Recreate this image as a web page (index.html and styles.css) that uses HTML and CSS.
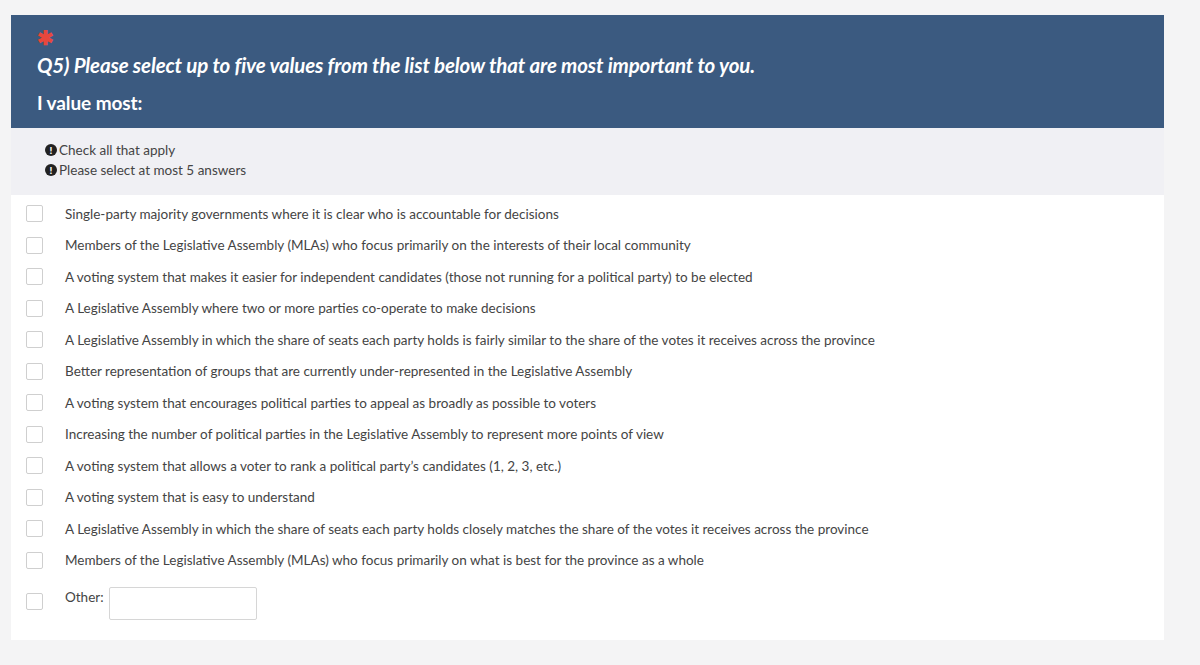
FILE: index.html
```html
<!DOCTYPE html>
<html lang="en">
<head>
<meta charset="utf-8">
<title>Q5</title>
<link rel="stylesheet" href="styles.css">
</head>
<body>
<div class="card">
  <div class="qhead">
    <div class="req">&#10033;</div>
    <div class="qtitle">Q5) Please select up to five values from the list below that are most important to you.</div>
    <div class="qsub">I value most:</div>
  </div>
  <div class="help">
    <div class="tip"><span class="ico">!</span>Check all that apply</div>
    <div class="tip"><span class="ico">!</span>Please select at most 5 answers</div>
  </div>
  <ul class="answers">
    <li class="ans"><span class="cb"></span><span class="lbl">Single-party majority governments where it is clear who is accountable for decisions</span></li>
    <li class="ans"><span class="cb"></span><span class="lbl">Members of the Legislative Assembly (MLAs) who focus primarily on the interests of their local community</span></li>
    <li class="ans"><span class="cb"></span><span class="lbl">A voting system that makes it easier for independent candidates (those not running for a political party) to be elected</span></li>
    <li class="ans"><span class="cb"></span><span class="lbl">A Legislative Assembly where two or more parties co-operate to make decisions</span></li>
    <li class="ans"><span class="cb"></span><span class="lbl">A Legislative Assembly in which the share of seats each party holds is fairly similar to the share of the votes it receives across the province</span></li>
    <li class="ans"><span class="cb"></span><span class="lbl">Better representation of groups that are currently under-represented in the Legislative Assembly</span></li>
    <li class="ans"><span class="cb"></span><span class="lbl">A voting system that encourages political parties to appeal as broadly as possible to voters</span></li>
    <li class="ans"><span class="cb"></span><span class="lbl">Increasing the number of political parties in the Legislative Assembly to represent more points of view</span></li>
    <li class="ans"><span class="cb"></span><span class="lbl">A voting system that allows a voter to rank a political party’s candidates (1, 2, 3, etc.)</span></li>
    <li class="ans"><span class="cb"></span><span class="lbl">A voting system that is easy to understand</span></li>
    <li class="ans"><span class="cb"></span><span class="lbl">A Legislative Assembly in which the share of seats each party holds closely matches the share of the votes it receives across the province</span></li>
    <li class="ans"><span class="cb"></span><span class="lbl">Members of the Legislative Assembly (MLAs) who focus primarily on what is best for the province as a whole</span></li>
    <li class="ans other"><span class="cb"></span><span class="lbl">Other:</span><span class="otherbox"></span></li>
  </ul>
</div>
</body>
</html>
```
FILE: styles.css
```css
html, body {
  margin: 0;
  padding: 0;
  background: #f4f4f5;
}
body {
  font-family: Lato, "Open Sans", sans-serif;
  color: #333;
  padding: 15px 36px 0 11px;
}
.card {
  background: #fff;
  height: 625px;
  box-sizing: border-box;
}
.qhead {
  background: #3b5a80;
  color: #fff;
  padding: 12px 26px 13px;
  height: 113px;
  box-sizing: border-box;
}
.req {
  color: #e8473d;
  font-size: 20px;
  line-height: 20px;
  height: 20px;
  font-weight: bold;
}
.qtitle {
  font-weight: bold;
  font-style: italic;
  font-size: 20.5px;
  letter-spacing: -0.14px;
  line-height: 24px;
  margin-top: 6px;
}
.qsub {
  font-weight: bold;
  font-size: 19px;
  letter-spacing: -0.1px;
  line-height: 24px;
  margin-top: 14px;
}
.help {
  background: #f0f0f4;
  height: 67px;
  box-sizing: border-box;
  padding: 12px 34px 0;
  font-size: 13.5px;
  color: #444;
}
.tip {
  display: flex;
  align-items: center;
  line-height: 20px;
}
.ico {
  width: 12px;
  height: 12px;
  border-radius: 50%;
  background: #222;
  color: #fff;
  font-size: 10px;
  font-weight: 900;
  line-height: 12px;
  text-align: center;
  margin-right: 2px;
}
.answers {
  list-style: none;
  margin: 0;
  padding: 3px 0 0 15px;
}
.ans {
  display: flex;
  align-items: center;
  height: 31.5px;
  font-size: 13.5px;
  color: #444;
}
.cb {
  width: 15px;
  height: 15px;
  border: 1px solid #cfcfcf;
  border-radius: 2px;
  background: #fff;
  flex: none;
  margin-right: 22px;
}
.other {
  margin-top: 10px;
  height: 34px;
}
.other .cb {
  margin-top: -3px;
}
.other .lbl {
  align-self: flex-start;
  margin-top: 3px;
}
.otherbox {
  width: 146px;
  height: 31px;
  border: 1px solid #d6d6d6;
  border-radius: 2px;
  margin-left: 5px;
}
```
